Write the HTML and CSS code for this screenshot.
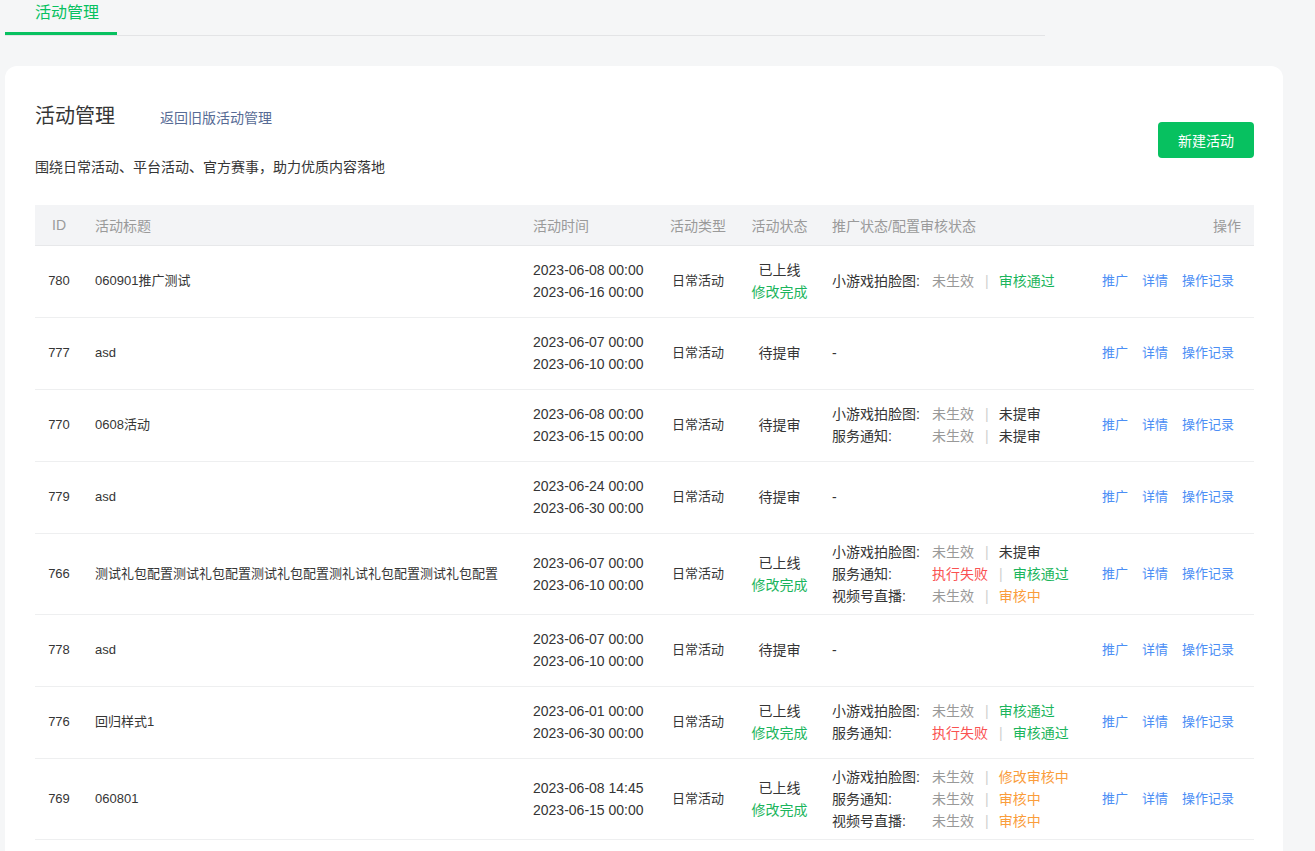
FILE: index.html
```html
<!DOCTYPE html>
<html lang="zh-CN">
<head>
<meta charset="utf-8">
<title>活动管理</title>
<link rel="stylesheet" href="styles.css">
</head>
<body>
<div class="page">
  <div class="tabbar">
    <div class="tab active">活动管理</div>
  </div>
  <div class="card">
    <div class="card-head">
      <div class="head-left">
        <div class="title-row">
          <h1 class="title">活动管理</h1>
          <a class="old-link">返回旧版活动管理</a>
        </div>
        <p class="subtitle">围绕日常活动、平台活动、官方赛事，助力优质内容落地</p>
      </div>
      <button class="btn-primary">新建活动</button>
    </div>

    <table class="grid">
      <colgroup>
        <col class="c-id"><col class="c-title"><col class="c-time"><col class="c-type"><col class="c-status"><col class="c-promo"><col class="c-ops">
      </colgroup>
      <thead>
        <tr>
          <th class="center">ID</th>
          <th>活动标题</th>
          <th>活动时间</th>
          <th class="center">活动类型</th>
          <th class="center">活动状态</th>
          <th>推广状态/配置审核状态</th>
          <th class="right">操作</th>
        </tr>
      </thead>
      <tbody>
        <tr>
          <td class="center sm">780</td>
          <td class="sm">060901推广测试</td>
          <td class="time">2023-06-08 00:00<br>2023-06-16 00:00</td>
          <td class="center sm">日常活动</td>
          <td class="center status">已上线<br><span class="ok">修改完成</span></td>
          <td class="promo">
            <div class="pl"><span class="lbl">小游戏拍脸图:</span><span class="muted">未生效</span><span class="sep">|</span><span class="ok">审核通过</span></div>
          </td>
          <td class="ops"><a>推广</a><a>详情</a><a>操作记录</a></td>
        </tr>
        <tr>
          <td class="center sm">777</td>
          <td class="sm">asd</td>
          <td class="time">2023-06-07 00:00<br>2023-06-10 00:00</td>
          <td class="center sm">日常活动</td>
          <td class="center status">待提审</td>
          <td class="promo">-</td>
          <td class="ops"><a>推广</a><a>详情</a><a>操作记录</a></td>
        </tr>
        <tr>
          <td class="center sm">770</td>
          <td class="sm">0608活动</td>
          <td class="time">2023-06-08 00:00<br>2023-06-15 00:00</td>
          <td class="center sm">日常活动</td>
          <td class="center status">待提审</td>
          <td class="promo">
            <div class="pl"><span class="lbl">小游戏拍脸图:</span><span class="muted">未生效</span><span class="sep">|</span><span>未提审</span></div>
            <div class="pl"><span class="lbl">服务通知:</span><span class="muted">未生效</span><span class="sep">|</span><span>未提审</span></div>
          </td>
          <td class="ops"><a>推广</a><a>详情</a><a>操作记录</a></td>
        </tr>
        <tr>
          <td class="center sm">779</td>
          <td class="sm">asd</td>
          <td class="time">2023-06-24 00:00<br>2023-06-30 00:00</td>
          <td class="center sm">日常活动</td>
          <td class="center status">待提审</td>
          <td class="promo">-</td>
          <td class="ops"><a>推广</a><a>详情</a><a>操作记录</a></td>
        </tr>
        <tr>
          <td class="center sm">766</td>
          <td class="sm">测试礼包配置测试礼包配置测试礼包配置测礼试礼包配置测试礼包配置</td>
          <td class="time">2023-06-07 00:00<br>2023-06-10 00:00</td>
          <td class="center sm">日常活动</td>
          <td class="center status">已上线<br><span class="ok">修改完成</span></td>
          <td class="promo">
            <div class="pl"><span class="lbl">小游戏拍脸图:</span><span class="muted">未生效</span><span class="sep">|</span><span>未提审</span></div>
            <div class="pl"><span class="lbl">服务通知:</span><span class="err">执行失败</span><span class="sep">|</span><span class="ok">审核通过</span></div>
            <div class="pl"><span class="lbl">视频号直播:</span><span class="muted">未生效</span><span class="sep">|</span><span class="warn">审核中</span></div>
          </td>
          <td class="ops"><a>推广</a><a>详情</a><a>操作记录</a></td>
        </tr>
        <tr>
          <td class="center sm">778</td>
          <td class="sm">asd</td>
          <td class="time">2023-06-07 00:00<br>2023-06-10 00:00</td>
          <td class="center sm">日常活动</td>
          <td class="center status">待提审</td>
          <td class="promo">-</td>
          <td class="ops"><a>推广</a><a>详情</a><a>操作记录</a></td>
        </tr>
        <tr>
          <td class="center sm">776</td>
          <td class="sm">回归样式1</td>
          <td class="time">2023-06-01 00:00<br>2023-06-30 00:00</td>
          <td class="center sm">日常活动</td>
          <td class="center status">已上线<br><span class="ok">修改完成</span></td>
          <td class="promo">
            <div class="pl"><span class="lbl">小游戏拍脸图:</span><span class="muted">未生效</span><span class="sep">|</span><span class="ok">审核通过</span></div>
            <div class="pl"><span class="lbl">服务通知:</span><span class="err">执行失败</span><span class="sep">|</span><span class="ok">审核通过</span></div>
          </td>
          <td class="ops"><a>推广</a><a>详情</a><a>操作记录</a></td>
        </tr>
        <tr>
          <td class="center sm">769</td>
          <td class="sm">060801</td>
          <td class="time">2023-06-08 14:45<br>2023-06-15 00:00</td>
          <td class="center sm">日常活动</td>
          <td class="center status">已上线<br><span class="ok">修改完成</span></td>
          <td class="promo">
            <div class="pl"><span class="lbl">小游戏拍脸图:</span><span class="muted">未生效</span><span class="sep">|</span><span class="warn">修改审核中</span></div>
            <div class="pl"><span class="lbl">服务通知:</span><span class="muted">未生效</span><span class="sep">|</span><span class="warn">审核中</span></div>
            <div class="pl"><span class="lbl">视频号直播:</span><span class="muted">未生效</span><span class="sep">|</span><span class="warn">审核中</span></div>
          </td>
          <td class="ops"><a>推广</a><a>详情</a><a>操作记录</a></td>
        </tr>
      </tbody>
    </table>
  </div>
</div>
</body>
</html>
```

FILE: styles.css
```css
* { box-sizing: border-box; }
html, body {
  margin: 0;
  padding: 0;
  background: #f5f6f7;
  font-family: "Liberation Sans", "Noto Sans CJK SC", sans-serif;
  color: #353535;
}
.page {
  padding-left: 5px;
  padding-bottom: 40px;
}
.tabbar {
  width: 1040px;
  height: 36px;
  border-bottom: 1px solid #e3e4e6;
  display: flex;
}
.tab {
  height: 35px;
  width: 112px;
  padding-left: 30px;
  font-size: 16px;
  line-height: 26px;
  white-space: nowrap;
}
.tab.active {
  color: #07c160;
  border-bottom: 3px solid #07c160;
}
.card {
  margin-top: 30px;
  width: 1278px;
  background: #fff;
  border-radius: 12px;
  padding: 36px 29px 30px 30px;
}
.card-head {
  display: flex;
  justify-content: space-between;
  align-items: center;
}
.title-row {
  display: flex;
  align-items: baseline;
}
.title {
  margin: 0;
  font-size: 20px;
  line-height: 28px;
  font-weight: normal;
  color: #353535;
}
.old-link {
  margin-left: 45px;
  font-size: 14px;
  color: #576b95;
  cursor: pointer;
}
.subtitle {
  margin: 27px 0 0;
  font-size: 14px;
  line-height: 20px;
  color: #353535;
}
.btn-primary {
  width: 96px;
  height: 36px;
  border: none;
  border-radius: 4px;
  background: #07c160;
  color: #fff;
  font-family: inherit;
  font-size: 14px;
}
.grid {
  margin-top: 28px;
  width: 1219px;
  table-layout: fixed;
  border-collapse: collapse;
}
.c-id { width: 48px; }
.c-title { width: 438px; }
.c-time { width: 136px; }
.c-type { width: 82px; }
.c-status { width: 81px; }
.c-promo { width: 270px; }
.c-ops { width: 164px; }
.grid th {
  height: 40px;
  background: #f3f4f6;
  color: #9a9a9a;
  font-size: 14px;
  font-weight: normal;
  text-align: left;
  padding: 0 12px;
  border-bottom: 1px solid #e7e8ea;
  white-space: nowrap;
}
.grid td {
  height: 72px;
  padding: 7px 12px;
  border-bottom: 1px solid #eeeff0;
  vertical-align: middle;
  font-size: 14px;
  line-height: 22px;
  color: #353535;
  white-space: nowrap;
}
.grid .center { text-align: center; }
.grid th.right { text-align: right; padding-right: 13px; }
.grid td.sm { font-size: 13px; }
.grid td.time { font-size: 14px; }
.pl { display: flex; white-space: nowrap; }
.lbl { width: 100px; flex: none; }
.sep { color: #cfcfcf; margin: 0 10px 0 11px; }
.muted { color: #999; }
.ok { color: #1bb55c; }
.err { color: #fa5151; }
.warn { color: #fa9d3b; }
.grid td.ops { font-size: 13px; }
.ops a {
  color: #4b8ef5;
  margin-right: 14px;
  cursor: pointer;
}
.ops a:last-child { margin-right: 0; }
```
